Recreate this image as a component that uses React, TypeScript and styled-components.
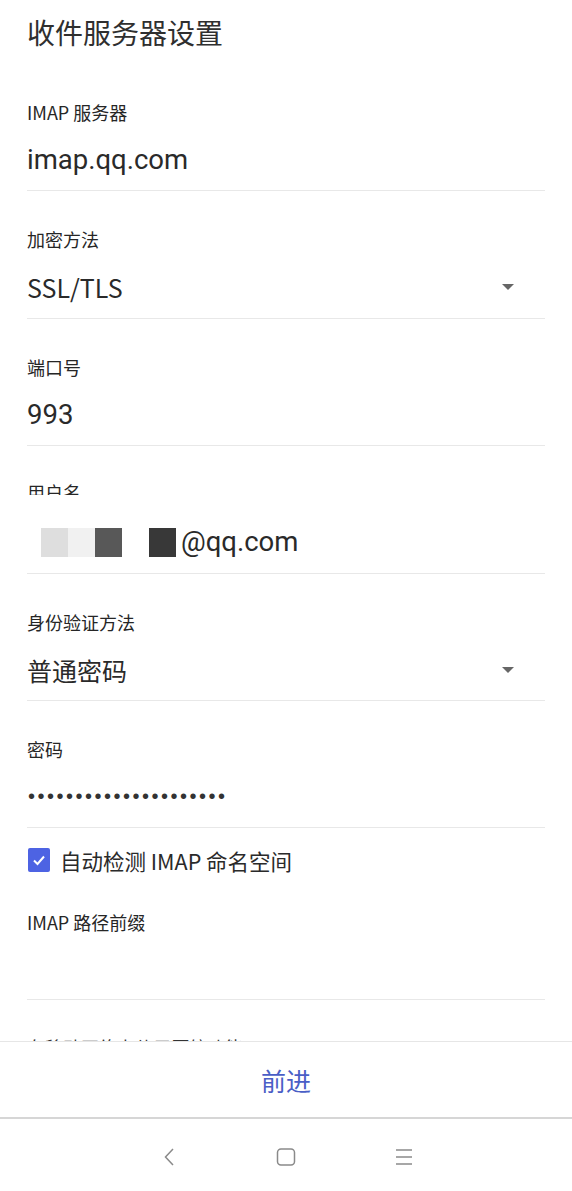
import styled, { createGlobalStyle } from "styled-components";

const GlobalStyle = createGlobalStyle`
  html, body {
    margin: 0;
    padding: 0;
    background: #fff;
  }
  * {
    box-sizing: border-box;
  }
`;

const CJK = `"Noto Sans CJK SC", "Noto Sans", sans-serif`;
const EDIT_FONT = `Roboto, "Noto Sans CJK SC", sans-serif`;

function ChevronDown() {
  return (
    <svg width="14" height="8" viewBox="0 0 14 8">
      <path d="M1 1 L13 1 L7 7 Z" fill="#666" />
    </svg>
  );
}

function NavBack() {
  return (
    <svg width="20" height="20" viewBox="0 0 20 20">
      <path d="M15 2 L7.5 10 L15 18" fill="none" stroke="#8a8a8a" strokeWidth="1.5" />
    </svg>
  );
}

function NavHome() {
  return (
    <svg width="20" height="20" viewBox="0 0 20 20">
      <rect x="1.5" y="2" width="17" height="16" rx="3.5" fill="none" stroke="#8a8a8a" strokeWidth="1.5" />
    </svg>
  );
}

function NavMenu() {
  return (
    <svg width="20" height="20" viewBox="0 0 20 20">
      <path d="M2 3 H18 M2 10 H18 M2 17 H18" fill="none" stroke="#8a8a8a" strokeWidth="1.3" />
    </svg>
  );
}

export default function App() {
  return (
    <>
      <GlobalStyle />
      <Screen>
        <Scroller>
          <PageTitle>收件服务器设置</PageTitle>

          <Field>
            <Label>IMAP 服务器</Label>
            <Value $kind="edit">imap.qq.com</Value>
          </Field>

          <Field>
            <Label>加密方法</Label>
            <Value $kind="spinner">
              SSL/TLS
              <ChevronDown />
            </Value>
          </Field>

          <Field>
            <Label>端口号</Label>
            <Value $kind="edit">993</Value>
          </Field>

          <Field>
            <Label $clip>用户名</Label>
            <Value $kind="edit" $shift>
              <Masked>
                <Pixel $shade="#dedede" />
                <Pixel $shade="#f1f1f1" />
                <Pixel $shade="#585858" />
                <Pixel $shade="transparent" />
                <Pixel $shade="#383838" />
                <Email>@qq.com</Email>
              </Masked>
            </Value>
          </Field>

          <Field>
            <Label>身份验证方法</Label>
            <Value $kind="spinner">
              普通密码
              <ChevronDown />
            </Value>
          </Field>

          <Field>
            <Label>密码</Label>
            <Dots>•••••••••••••••••••••</Dots>
          </Field>

          <CheckRow>
            <CheckBox>
              <svg width="14" height="12" viewBox="0 0 14 12">
                <path d="M2 6.5 L5.5 10 L12 2.5" fill="none" stroke="#fff" strokeWidth="2" />
              </svg>
            </CheckBox>
            <CheckText>自动检测 IMAP 命名空间</CheckText>
          </CheckRow>

          <Field $short>
            <Label>IMAP 路径前缀</Label>
            <Value $kind="edit" />
          </Field>

          <PeekLabel>在移动网络上使用压缩功能</PeekLabel>
        </Scroller>

        <ActionBar>
          <NextButton>前进</NextButton>
        </ActionBar>

        <NavBar>
          <NavBack />
          <NavHome />
          <NavMenu />
        </NavBar>
      </Screen>
    </>
  );
}

const Screen = styled.div`
  height: 1191px;
  display: flex;
  flex-direction: column;
  background: #fff;
  overflow: hidden;
`;

const Scroller = styled.div`
  flex: 1;
  min-height: 0;
  overflow: hidden;
  padding: 0 27px;
`;

const PageTitle = styled.h1`
  margin: 0;
  height: 64px;
  display: flex;
  align-items: center;
  font-family: ${CJK};
  font-size: 28px;
  font-weight: 400;
  color: #2f2f2f;
`;

const Field = styled.div<{ $short?: boolean }>`
  height: ${(p) => (p.$short ? "108px" : "127.4px")};
  padding-top: ${(p) => (p.$short ? "18px" : "36px")};
  border-bottom: 1px solid #e8e8e8;
  display: flex;
  flex-direction: column;
`;

const Label = styled.div<{ $clip?: boolean }>`
  font-family: ${CJK};
  font-size: 18px;
  line-height: 24px;
  color: #262626;
  margin-top: ${(p) => (p.$clip ? "-2px" : "0")};
  height: ${(p) => (p.$clip ? "15px" : "24px")};
  overflow: hidden;
`;

const Value = styled.div<{ $kind: "edit" | "spinner"; $shift?: boolean }>`
  margin-top: ${(p) => (p.$shift ? "31px" : "20px")};
  height: 32px;
  padding-right: 30px;
  display: flex;
  align-items: center;
  justify-content: space-between;
  font-family: ${(p) => (p.$kind === "edit" ? EDIT_FONT : CJK)};
  font-size: ${(p) => (p.$kind === "edit" ? "27.5px" : "25px")};
  line-height: 32px;
  color: #2a2a2a;
`;

const Masked = styled.div`
  display: flex;
  align-items: center;
  padding-left: 14px;
`;

const Pixel = styled.span<{ $shade: string }>`
  display: inline-block;
  width: 27px;
  height: 29px;
  background: ${(p) => p.$shade};
`;

const Email = styled.span`
  margin-left: 5px;
`;

const Dots = styled.div`
  margin-top: 20px;
  height: 32px;
  display: flex;
  align-items: center;
  font-family: "Liberation Sans", sans-serif;
  font-size: 20px;
  letter-spacing: 2.5px;
  color: #333;
  padding-left: 1px;
`;

const CheckRow = styled.div`
  height: 64px;
  display: flex;
  align-items: center;
  gap: 10px;
  padding-left: 1px;
`;

const CheckBox = styled.span`
  width: 22px;
  height: 24px;
  border-radius: 2px;
  background: #4d63e3;
  display: flex;
  align-items: center;
  justify-content: center;
`;

const CheckText = styled.span`
  font-family: ${CJK};
  font-size: 21.5px;
  color: #2a2a2a;
`;

const PeekLabel = styled.div`
  margin-top: 35px;
  font-family: ${CJK};
  font-size: 18px;
  line-height: 24px;
  color: #333;
`;

const ActionBar = styled.div`
  height: 78px;
  flex-shrink: 0;
  border-top: 1px solid #e6e6e6;
  border-bottom: 2px solid #d6d6d6;
  display: flex;
  align-items: center;
  justify-content: center;
  background: #fff;
`;

const NextButton = styled.button`
  border: none;
  background: none;
  padding: 0 20px;
  font-family: ${CJK};
  font-size: 25px;
  color: #4a5ec6;
  cursor: pointer;
`;

const NavBar = styled.div`
  height: 72px;
  flex-shrink: 0;
  display: flex;
  align-items: center;
  justify-content: center;
  gap: 98px;
  padding-top: 4px;
  background: #fff;
`;
